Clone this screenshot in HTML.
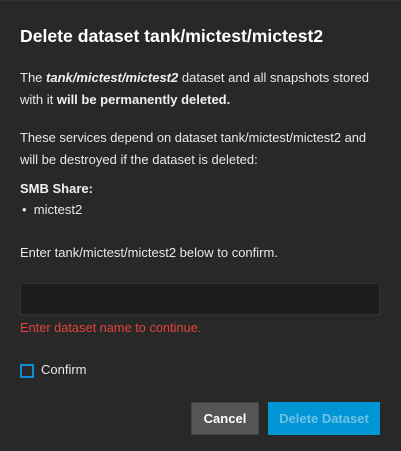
<!DOCTYPE html>
<html><head><style>
body{margin:0;width:401px;height:451px;background:#282828;font-family:"Liberation Sans",sans-serif;color:#e8e8e8;position:relative;overflow:hidden}
.a{position:absolute;left:20px;font-size:13px;white-space:nowrap}
b{font-weight:bold;color:#f0f0f0}
</style></head><body>
<div style="position:absolute;left:0;top:0;width:401px;height:1px;background:#333"></div>
<div class="a" style="top:26px;font-size:17.6px;font-weight:bold;color:#fff">Delete dataset tank/mictest/mictest2</div>
<div class="a" style="top:70px">The <b><i>tank/mictest/mictest2</i></b> dataset and all snapshots stored</div>
<div class="a" style="top:92px">with it <b>will be permanently deleted.</b></div>
<div class="a" style="top:130px;font-size:12.9px">These services depend on dataset tank/mictest/mictest2 and</div>
<div class="a" style="top:152px">will be destroyed if the dataset is deleted:</div>
<div class="a" style="top:181px"><b>SMB Share:</b></div>
<div class="a" style="top:202px;left:22px">•&nbsp;&nbsp;mictest2</div>
<div class="a" style="top:245px">Enter tank/mictest/mictest2 below to confirm.</div>
<div style="position:absolute;left:20px;top:283px;width:358px;height:30px;background:#1c1c1c;border:1px solid #333"></div>
<div class="a" style="top:320px;color:#e0453a;font-size:12.8px">Enter dataset name to continue.</div>
<div style="position:absolute;left:20px;top:364px;width:10px;height:10px;border:2px solid #0a8fd1"></div>
<div class="a" style="top:362px;left:41px">Confirm</div>
<div style="position:absolute;left:191px;top:402px;width:68px;height:33px;background:#555;border:1px solid #444;box-sizing:border-box;color:#fff;font-weight:bold;font-size:13px;text-align:center;line-height:31px">Cancel</div>
<div style="position:absolute;left:268px;top:402px;width:112px;height:33px;background:#0095d5;color:#6fc1e6;font-weight:bold;font-size:13px;text-align:center;line-height:33px">Delete Dataset</div>
</body></html>
